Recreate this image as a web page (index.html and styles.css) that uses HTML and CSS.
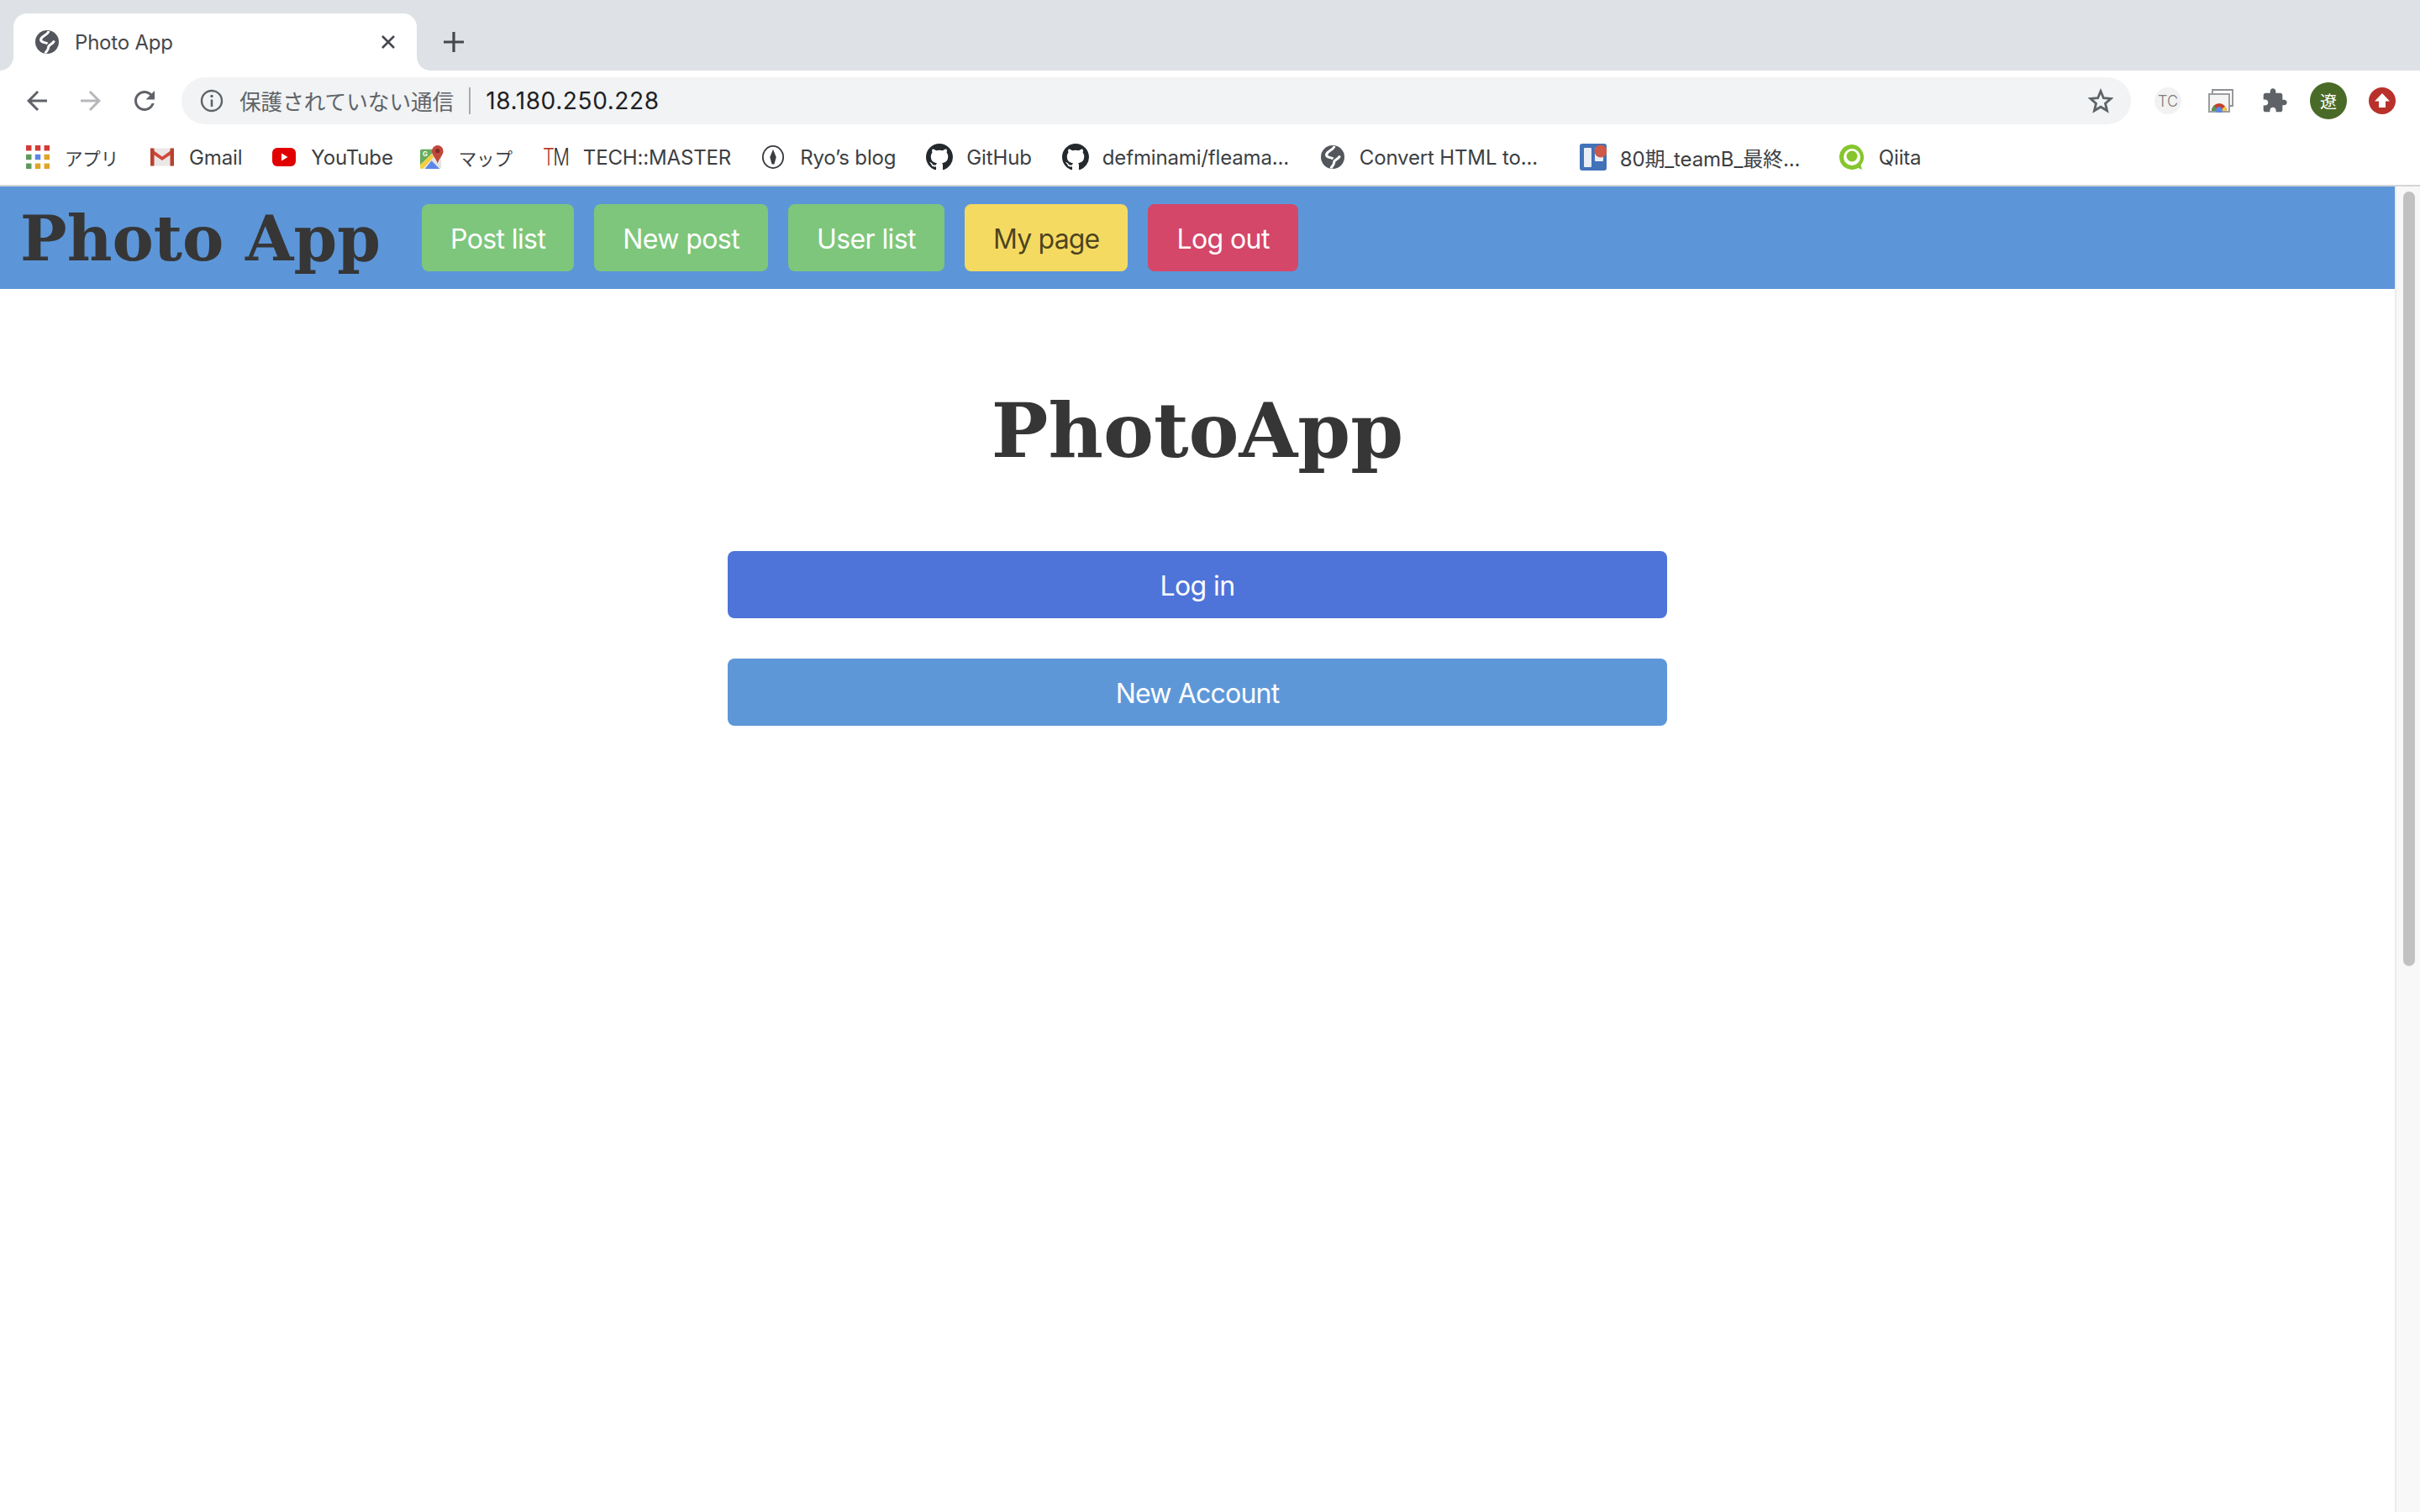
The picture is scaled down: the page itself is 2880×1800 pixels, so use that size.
FILE: index.html
```html
<!DOCTYPE html>
<html lang="ja">
<head>
  <meta charset="UTF-8" />
  <title>Photo App</title>
  <link rel="stylesheet" href="styles.css">
</head>
<body>
  <svg class="defs" width="0" height="0">
    <symbol id="globe" viewBox="0 0 28 28">
      <circle cx="14" cy="14" r="14" fill="#53565c"/>
      <path d="M16 1C15 6 8 6 6.500 11 6 15 12 14 14.500 16" fill="none" stroke="#fff" stroke-width="3"/>
      <path d="M22.500 12.500C21 17 15 17 15.500 21 15.500 24 12.500 25 12 27.500" fill="none" stroke="#fff" stroke-width="3"/>
    </symbol>
    <symbol id="github" viewBox="0 0 16 16">
      <path fill="#24292e" d="M8 0C3.58 0 0 3.58 0 8c0 3.540 2.290 6.530 5.470 7.590.4.070.55-.17.55-.38 0-.19-.01-.82-.01-1.490-2.010.37-2.530-.49-2.690-.94-.09-.23-.48-.94-.82-1.130-.28-.15-.68-.52-.01-.53.63-.01 1.080.58 1.230.82.72 1.210 1.870.87 2.330.66.07-.52.28-.87.51-1.070-1.780-.2-3.640-.89-3.640-3.950 0-.87.31-1.590.82-2.150-.08-.2-.36-1.020.08-2.120 0 0 .67-.21 2.200.82.64-.18 1.320-.27 2-.27.68 0 1.360.09 2 .27 1.530-1.040 2.200-.82 2.200-.82.44 1.100.16 1.920.08 2.120.51.56.82 1.270.82 2.150 0 3.070-1.870 3.750-3.650 3.950.29.25.54.73.54 1.480 0 1.070-.01 1.930-.01 2.200 0 .21.15.46.55.38A8.013 8.013 0 0016 8c0-4.420-3.580-8-8-8z"/>
    </symbol>
  </svg>

  <header class="browser">
    <div class="tab-strip">
      <div class="tab">
        <svg class="tab-icon"><use href="#globe"/></svg>
        <span class="tab-title">Photo App</span>
        <svg class="tab-close" viewBox="0 0 18 18"><path d="M2 2l14 14M16 2L2 16" stroke="#45484d" stroke-width="2.600" fill="none"/></svg>
      </div>
      <svg class="new-tab" viewBox="0 0 24 24"><path d="M12 0v24M0 12h24" stroke="#45484d" stroke-width="3.200" fill="none"/></svg>
    </div>

    <div class="toolbar">
      <svg class="nav-btn" viewBox="0 0 24 24"><path fill="#5f6368" d="M20 11H7.830l5.590-5.590L12 4l-8 8 8 8 1.410-1.410L7.830 13H20v-2z"/></svg>
      <svg class="nav-btn" viewBox="0 0 24 24"><path fill="#b6b8bb" d="M4 11h12.170l-5.590-5.590L12 4l8 8-8 8-1.410-1.410L16.170 13H4v-2z"/></svg>
      <svg class="nav-btn" viewBox="0 0 24 24"><path fill="#5f6368" d="M17.650 6.350C16.200 4.900 14.210 4 12 4c-4.420 0-7.990 3.580-7.990 8s3.570 8 7.990 8c3.730 0 6.840-2.550 7.730-6h-2.080c-.82 2.330-3.040 4-5.650 4-3.310 0-6-2.690-6-6s2.690-6 6-6c1.660 0 3.140.69 4.220 1.780L13 11h7V4l-2.350 2.350z"/></svg>
      <div class="omnibox">
        <svg class="info-icon" viewBox="0 0 28 28"><circle cx="14" cy="14" r="12" fill="none" stroke="#5f6368" stroke-width="2.400"/><path d="M14 12.500V21" stroke="#5f6368" stroke-width="2.600"/><circle cx="14" cy="8.500" r="1.700" fill="#5f6368"/></svg>
        <span class="not-secure">保護されていない通信</span>
        <span class="divider"></span>
        <span class="url">18.180.250.228</span>
        <svg class="star" viewBox="0 0 30 30"><path d="M15 3.500l3.400 8.200 8.800.7-6.700 5.800 2.100 8.600L15 22.200l-7.600 4.600 2.100-8.600-6.700-5.800 8.800-.7z" fill="none" stroke="#5f6368" stroke-width="2.800"/></svg>
      </div>
      <div class="extensions">
        <span class="ext-tc">TC</span>
        <svg class="ext-cast" viewBox="0 0 30 28">
          <path d="M5 5V1h24v19h-5" fill="none" stroke="#8d8f92" stroke-width="1.800"/>
          <rect x="1" y="6" width="24" height="21" fill="#f4f4f4" stroke="#9a9c9f" stroke-width="2"/>
          <path d="M4 26a9 9 0 0 1 18 0z" fill="#c5402f"/>
          <path d="M4 26a9 9 0 0 1 3-6.700l4 6.700z" fill="#4f9a53"/>
          <path d="M22 26a9 9 0 0 0-2-5.600l-6 5.600z" fill="#f3c93f"/>
          <circle cx="13" cy="25" r="3.800" fill="#5c86e8"/>
        </svg>
        <svg class="ext-puzzle" viewBox="0 0 24 24"><path fill="#5f6368" d="M20.500 11H19V7c0-1.100-.9-2-2-2h-4V3.500C13 2.120 11.880 1 10.500 1S8 2.120 8 3.500V5H4c-1.100 0-1.990.9-1.990 2v3.800H3.500c1.490 0 2.700 1.210 2.700 2.700s-1.210 2.700-2.700 2.700H2V20c0 1.100.9 2 2 2h3.800v-1.500c0-1.490 1.210-2.700 2.700-2.700 1.490 0 2.700 1.210 2.700 2.700V22H17c1.100 0 2-.9 2-2v-4h1.500c1.380 0 2.500-1.120 2.500-2.500S21.880 11 20.500 11z"/></svg>
        <span class="avatar">遼</span>
        <svg class="ext-update" viewBox="0 0 32 32"><circle cx="16" cy="16" r="16" fill="#b9312b"/><path d="M16 7l9 9.500h-5V24h-8v-7.500H7z" fill="#fff"/></svg>
      </div>
    </div>

    <nav class="bookmarks">
      <a class="bm">
        <svg class="bm-icon" viewBox="0 0 26 26">
          <g fill="#d33b35"><rect x="0" y="0" width="6" height="6"/><rect x="10" y="0" width="6" height="6"/><rect x="20" y="0" width="6" height="6"/></g>
          <rect x="0" y="10" width="6" height="6" fill="#5f9a5c"/><rect x="10" y="10" width="6" height="6" fill="#5c86e8"/><rect x="20" y="10" width="6" height="6" fill="#e0a428"/>
          <rect x="0" y="20" width="6" height="6" fill="#5f9a5c"/><rect x="10" y="20" width="6" height="6" fill="#e0a428"/><rect x="20" y="20" width="6" height="6" fill="#e0a428"/>
        </svg>
        <span class="bm-ja">アプリ</span>
      </a>
      <a class="bm">
        <svg class="bm-icon" viewBox="0 0 28 24">
          <rect x="0" y="1.500" width="28" height="21" fill="#e9e8e7"/>
          <path d="M0 1.500l14 10 14-10v5L14 16 0 6.500z" fill="#d2483c"/>
          <rect x="0" y="1.500" width="4.500" height="21" fill="#b8412f"/><rect x="23.500" y="1.500" width="4.500" height="21" fill="#b8412f"/>
        </svg>
        Gmail
      </a>
      <a class="bm bm-yt">
        <svg class="bm-icon" viewBox="0 0 28 28"><rect y="3" width="28" height="22" rx="6" fill="#e00000"/><path d="M11 9.500l7.500 4.500-7.500 4.500z" fill="#fff"/></svg>
        YouTube
      </a>
      <a class="bm">
        <svg class="bm-icon" viewBox="0 0 29 29">
          <rect x="0" y="5" width="26" height="24" rx="2" fill="#e4e4e4"/>
          <path d="M2 5h18L0 24V7a2 2 0 0 1 2-2z" fill="#68ab5c"/>
          <path d="M0 24l14-13 3 3L3 29H2a2 2 0 0 1-2-2z" fill="#f2cf3c"/>
          <path d="M6 29l8-10 10 10z" fill="#5c86e8"/>
          <text class="maps-g" x="3" y="13.500">G</text>
          <path d="M21.500 0a7 7 0 0 1 7 7c0 5.500-5 8.500-7 15.500-2-7-7-10-7-15.500a7 7 0 0 1 7-7z" fill="#c1463b"/>
          <circle cx="21.500" cy="7" r="2.600" fill="#7e2a23"/>
        </svg>
        <span class="bm-ja">マップ</span>
      </a>
      <a class="bm">
        <span class="bm-tm"><span class="tm-t">T</span>M</span>
        TECH::MASTER
      </a>
      <a class="bm">
        <svg class="bm-icon" viewBox="0 0 28 30">
          <ellipse cx="14" cy="15" rx="13" ry="14" fill="none" stroke="#3a3c40" stroke-width="2"/>
          <path d="M14 5l4 10-2.500 9h-3L10 15z" fill="#3a3c40"/>
        </svg>
        Ryo’s blog
      </a>
      <a class="bm"><svg class="bm-icon bm-gh"><use href="#github"/></svg>GitHub</a>
      <a class="bm bm-long"><svg class="bm-icon bm-gh"><use href="#github"/></svg>defminami/fleama...</a>
      <a class="bm bm-long"><svg class="bm-icon"><use href="#globe"/></svg>Convert HTML to...</a>
      <a class="bm bm-long">
        <svg class="bm-icon bm-gh" viewBox="0 0 32 32">
          <rect width="32" height="32" rx="3" fill="#4272b8"/>
          <rect x="5" y="5" width="9" height="23" rx="1" fill="#e9eef6"/>
          <rect x="18" y="5" width="10" height="16" rx="1" fill="#e9eef6"/>
          <circle cx="25" cy="9" r="7.500" fill="#cd5a48"/>
        </svg>
        80期_teamB_最終...
      </a>
      <a class="bm">
        <svg class="bm-icon bm-gh" viewBox="0 0 32 32">
          <path d="M16 1a15 15 0 1 0 7.500 28l4.500 2-1.500-5.500A15 15 0 0 0 16 1z" fill="#86c52e"/>
          <circle cx="16" cy="16" r="10" fill="#fff"/>
          <circle cx="16" cy="15" r="6.500" fill="#86c52e"/>
        </svg>
        Qiita
      </a>
    </nav>
  </header>

  <div class="viewport">
    <div class="page">
      <div class="navbar">
        <h1 class="brand">Photo App</h1>
        <div class="nav-links">
          <a class="button is-success">Post list</a>
          <a class="button is-success">New post</a>
          <a class="button is-success">User list</a>
          <a class="button is-warning">My page</a>
          <a class="button is-danger">Log out</a>
        </div>
      </div>
      <main class="home">
        <h2 class="home-title">PhotoApp</h2>
        <a class="button is-wide is-primary">Log in</a>
        <a class="button is-wide is-info">New Account</a>
      </main>
    </div>
    <div class="scrollbar"><div class="thumb"></div></div>
  </div>
</body>
</html>
```

FILE: styles.css
```css
* {
  box-sizing: border-box;
}
html, body {
  margin: 0;
  height: 100%;
}
body {
  display: flex;
  flex-direction: column;
  height: 1800px;
  overflow: hidden;
  background: #fff;
  color: #363636;
  font-family: Inter, "Noto Sans CJK JP", sans-serif;
}
.defs {
  position: absolute;
}

/* browser window */
.browser {
  flex: none;
}
.tab-strip {
  display: flex;
  align-items: flex-end;
  height: 84px;
  padding-left: 16px;
  background: #dee1e6;
}
.tab {
  position: relative;
  display: flex;
  align-items: center;
  width: 480px;
  height: 68px;
  padding: 0 25px 0 26px;
  background: #fff;
  border-radius: 16px 16px 0 0;
}
.tab::before, .tab::after {
  content: "";
  position: absolute;
  bottom: 0;
  width: 16px;
  height: 16px;
  background: radial-gradient(circle at 0 0, #dee1e6 15.5px, #fff 16px);
}
.tab::before {
  left: -16px;
}
.tab::after {
  right: -16px;
  background: radial-gradient(circle at 100% 0, #dee1e6 15.500px, #fff 16px);
}
.tab-icon {
  width: 28px;
  height: 28px;
  flex: none;
}
.tab-title {
  flex: 1;
  margin-left: 19px;
  font-size: 24px;
  letter-spacing: -0.2px;
  color: #45484d;
}
.tab-close {
  width: 18px;
  height: 18px;
}
.new-tab {
  width: 24px;
  height: 24px;
  margin: 0 0 22px 32px;
}
.toolbar {
  display: flex;
  align-items: center;
  height: 72px;
  padding: 0 16px 0 0;
  background: #fff;
}
.nav-btn {
  width: 36px;
  height: 36px;
  margin-left: 26px;
  margin-right: 2px;
}
.nav-btn + .nav-btn {
  margin-left: 26px;
}
.omnibox {
  display: flex;
  align-items: center;
  width: 2320px;
  height: 56px;
  margin-left: 24px;
  padding: 0 21px 0 22px;
  background: #f1f3f4;
  border-radius: 28px;
}
.info-icon {
  width: 28px;
  height: 28px;
  flex: none;
}
.not-secure {
  margin-left: 19px;
  padding-bottom: 2px;
  font-size: 25.6px;
  color: #5f6368;
  white-space: nowrap;
}
.divider {
  width: 2px;
  height: 32px;
  margin: 0 18px;
  background: #a9abae;
}
.url {
  font-size: 28px;
  letter-spacing: 0.6px;
  color: #202124;
}
.star {
  width: 30px;
  height: 30px;
  margin-left: auto;
}
.extensions {
  display: flex;
  align-items: center;
  margin-left: 28px;
}
.ext-tc {
  display: flex;
  align-items: center;
  justify-content: center;
  width: 32px;
  height: 32px;
  border-radius: 50%;
  background: #f2f2f2;
  color: #7b7b7b;
  font-size: 18px;
  font-weight: 300;
}
.ext-cast {
  width: 30px;
  height: 28px;
  margin-left: 32px;
}
.ext-puzzle {
  width: 32px;
  height: 32px;
  margin-left: 33px;
}
.avatar {
  display: flex;
  align-items: center;
  justify-content: center;
  width: 44px;
  height: 44px;
  margin-left: 26px;
  border-radius: 50%;
  background: #4a6b27;
  color: #fff;
  font-size: 20px;
}
.ext-update {
  width: 32px;
  height: 32px;
  margin-left: 26px;
}
.bookmarks {
  display: flex;
  align-items: center;
  height: 66px;
  padding: 0 0 2px 31px;
  border-bottom: 2px solid #d3d5d8;
  background: #fff;
}
.bm {
  display: flex;
  align-items: center;
  gap: 18px;
  margin-right: 36px;
  font-size: 24px;
  letter-spacing: -0.15px;
  color: #3c4043;
  white-space: nowrap;
}
.bm:first-child {
  margin-right: 38px;
}
.bm-yt {
  margin-right: 32px;
}
.bm-long {
  width: 272px;
}
.bm-icon {
  width: 28px;
  height: 28px;
  flex: none;
}
.bm-gh {
  width: 32px;
  height: 32px;
  margin-right: -2px;
}
.bm-ja {
  font-size: 21.5px;
}
.maps-g {
  font-size: 8px;
  font-weight: 700;
  fill: #fff;
}
.bm-tm {
  width: 30px;
  font-size: 28px;
  font-weight: 300;
  letter-spacing: -2px;
  color: #333;
  transform: scaleX(0.78);
  transform-origin: left;
}
.tm-t {
  color: #b5402f;
}

/* page */
.viewport {
  flex: 1;
  display: flex;
  min-height: 0;
}
.page {
  flex: 1;
  background: #fff;
}
.navbar {
  display: flex;
  align-items: center;
  height: 122px;
  padding-left: 24px;
  background: #5c96d8;
}
.brand {
  flex: none;
  width: 478px;
  margin: 0;
  padding-top: 2px;
  font-family: "DejaVu Serif", "Liberation Serif", serif;
  font-size: 74px;
  font-weight: 700;
  color: #363636;
  white-space: nowrap;
}
.nav-links {
  display: flex;
  gap: 24px;
}
.button {
  display: flex;
  align-items: center;
  justify-content: center;
  height: 80px;
  padding: 2px 34px 0;
  border-radius: 8px;
  font-size: 32px;
  letter-spacing: -0.6px;
  color: #fff;
}
.is-success {
  background: #7dc67c;
}
.is-warning {
  background: #f5da62;
  color: rgba(0, 0, 0, 0.7);
  letter-spacing: -0.8px;
}
.is-danger {
  background: #d44769;
}
.is-primary {
  background: #4e74d9;
}
.is-info {
  background: #5e97d8;
  letter-spacing: -0.8px;
}
.home {
  display: flex;
  flex-direction: column;
  align-items: center;
  padding-top: 108px;
}
.home-title {
  margin: 0 0 84px;
  font-family: "DejaVu Serif", "Liberation Serif", serif;
  font-size: 90px;
  font-weight: 700;
  line-height: 120px;
  color: #363636;
}
.button.is-wide {
  width: 1118px;
  margin-bottom: 48px;
}
.scrollbar {
  flex: none;
  width: 30px;
  padding: 6px 6px 0 8px;
  background: #f8f8f8;
  border-left: 2px solid #ececec;
}
.thumb {
  height: 922px;
  border-radius: 8px;
  background: #c1c1c1;
}
```
